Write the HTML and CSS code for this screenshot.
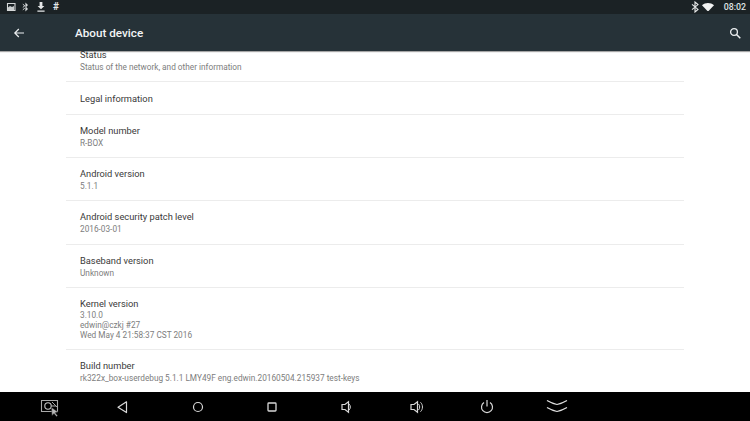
FILE: index.html
```html
<!doctype html>
<html lang="en">
<head>
  <meta charset="UTF-8">
  <title>About device</title>
  <link rel="stylesheet" href="styles.css">
</head>
<body>
  <div class="screen">
    <div class="statusbar">
      <div class="status-left">
        <svg class="ico" viewBox="0 0 12 12" width="12" height="12"><path d="M2.500 2.500h7.500v7H2.500z" fill="none" stroke="#d5d8d9" stroke-width="1.100"/><path d="M3 6.500l2-1.500 2 1 2-1v4H3z" fill="#c9cdce"/></svg>
        <svg class="ico" viewBox="0 0 12 12" width="12" height="12"><path d="M2.800 3.200l2 1.600-2 1.600M2.800 8.800l2-1.600" fill="none" stroke="#d5d8d9" stroke-width="1"/><path d="M5.400 1.500v9l2.600-2.400-1.800-2 1.800-2z" fill="#d5d8d9"/></svg>
        <svg class="ico" viewBox="0 0 12 12" width="12" height="12"><path d="M4.600 1h2.800v4h2L6 8.300 2.600 5h2zM2.400 9.600h7.200v1.200H2.400z" fill="#e4e6e7"/></svg>
        <span class="hash">#</span>
      </div>
      <div class="status-right">
        <svg class="ico" viewBox="0 0 12 12" width="12" height="12"><path d="M3 3.400l6 5-3 2.600V1l3 2.600-6 5" fill="none" stroke="#e8eaea" stroke-width="1.100"/></svg>
        <svg class="wifi" viewBox="0 0 14 10" width="12" height="8.600"><path d="M0 2.600C4-.8 10-.8 14 2.600L7 10z" fill="#f2f3f3"/></svg>
        <span class="clock">08:02</span>
      </div>
    </div>

    <div class="toolbar">
      <svg class="back" viewBox="0 0 12 12" width="12" height="12"><path d="M11 6H2M5.800 2L1.800 6l4 4" fill="none" stroke="#eceff1" stroke-width="1.200"/></svg>
      <h1>About device</h1>
      <svg class="search" viewBox="0 0 12 12" width="12" height="12"><circle cx="5" cy="5" r="3.400" fill="none" stroke="#eceff1" stroke-width="1.300"/><path d="M7.500 7.500l3.800 3.800" stroke="#eceff1" stroke-width="1.500"/></svg>
    </div>

    <div class="content">
      <div class="list">
        <div class="row row-status">
          <div class="title">Status</div>
          <div class="sub">Status of the network, and other information</div>
        </div>
        <div class="row row-single">
          <div class="title">Legal information</div>
        </div>
        <div class="row">
          <div class="title">Model number</div>
          <div class="sub">R-BOX</div>
        </div>
        <div class="row">
          <div class="title">Android version</div>
          <div class="sub">5.1.1</div>
        </div>
        <div class="row">
          <div class="title">Android security patch level</div>
          <div class="sub">2016-03-01</div>
        </div>
        <div class="row">
          <div class="title">Baseband version</div>
          <div class="sub">Unknown</div>
        </div>
        <div class="row row-kernel">
          <div class="title">Kernel version</div>
          <div class="sub">3.10.0<br>edwin@czkj #27<br>Wed May 4 21:58:37 CST 2016</div>
        </div>
        <div class="row">
          <div class="title">Build number</div>
          <div class="sub">rk322x_box-userdebug 5.1.1 LMY49F eng.edwin.20160504.215937 test-keys</div>
        </div>
      </div>
    </div>

    <div class="navbar">
      <svg class="nav-ico" viewBox="0 0 20 20" width="20" height="20"><path d="M1.500 3.500h16v11h-16z" fill="none" stroke="#a9a9a9" stroke-width="1.100"/><circle cx="8" cy="9" r="3.200" fill="none" stroke="#c8c8c8" stroke-width="1.100"/><path d="M12 5l6 6M11 9h5" stroke="#a9a9a9" stroke-width="1"/><path d="M11.500 10.500l.5 8 2-2 2.500 3 1-.8-2.300-3 2.600-.7z" fill="#bbb" stroke="#333" stroke-width=".5"/></svg>
      <svg class="nav-ico" viewBox="0 0 20 20" width="20" height="20"><path d="M14.500 4.800v10.800L6 10.200z" fill="none" stroke="#d8d8d8" stroke-width="1.200" stroke-linejoin="round"/></svg>
      <svg class="nav-ico" viewBox="0 0 20 20" width="20" height="20"><circle cx="10" cy="10" r="4.500" fill="none" stroke="#d8d8d8" stroke-width="1.200"/></svg>
      <svg class="nav-ico" viewBox="0 0 20 20" width="20" height="20"><rect x="6" y="6" width="8" height="8" rx=".8" fill="none" stroke="#d8d8d8" stroke-width="1.300"/></svg>
      <svg class="nav-ico" viewBox="0 0 20 20" width="20" height="20"><path d="M5 7.500h3L11.500 4.800v10.400L8 12.500H5z" fill="none" stroke="#d8d8d8" stroke-width="1.200"/><path d="M12 7c1.800 1.500 1.800 4.500 0 6" fill="none" stroke="#d8d8d8" stroke-width="1"/></svg>
      <svg class="nav-ico" viewBox="0 0 20 20" width="20" height="20"><path d="M3 7.500h3L9.500 4.800v10.400L6 12.500H3z" fill="none" stroke="#d8d8d8" stroke-width="1.200"/><path d="M10.500 7c1.600 1.500 1.600 4.500 0 6M12.500 5.300c2.600 2.500 2.600 6.900 0 9.400" fill="none" stroke="#d8d8d8" stroke-width="1"/></svg>
      <svg class="nav-ico" viewBox="0 0 20 20" width="20" height="20"><path d="M7 5.500a5.500 5.500 0 1 0 6 0M10 3v6.500" fill="none" stroke="#d8d8d8" stroke-width="1.200"/></svg>
      <svg class="nav-ico" viewBox="0 0 24 20" width="24" height="20"><path d="M2 3.500c3.500 2 6.500 3.300 10 4 3.500-.7 6.500-2 10-4M2 10.500c3.500 2 6.500 3.300 10 4 3.500-.7 6.500-2 10-4" fill="none" stroke="#e0e0e0" stroke-width="1.200"/></svg>
    </div>
  </div>
</body>
</html>
```

FILE: styles.css
```css
html, body {
  margin: 0;
  padding: 0;
  background-color: #000;
}

.screen {
  width: 750px;
  height: 421px;
  display: flex;
  flex-direction: column;
  overflow: hidden;
  font-family: Roboto, sans-serif;
}

.statusbar {
  height: 14px;
  flex: none;
  background-color: #1b2225;
  display: flex;
  justify-content: space-between;
  align-items: center;
  padding: 0 4px 0 5px;
  color: #e8eaea;
}

.status-left {
  display: flex;
  align-items: center;
  gap: 3px;
}

.status-right {
  display: flex;
  align-items: center;
}

.ico {
  display: block;
}

.hash {
  width: 12px;
  font-size: 10px;
  font-weight: 700;
  line-height: 12px;
  text-align: center;
  color: #e4e6e7;
}

.wifi {
  margin-left: 1px;
}

.clock {
  margin-left: 9.500px;
  font-size: 8.800px;
  font-weight: 500;
  color: #dfe2e3;
}

.toolbar {
  height: 37px;
  flex: none;
  background-color: #263238;
  display: flex;
  align-items: center;
  padding: 0 9px 0 13px;
  box-shadow: 0 1px 1px rgba(0, 0, 0, 0.35);
  position: relative;
  z-index: 1;
}

.toolbar h1 {
  margin: 0 0 0 50px;
  flex: 1;
  font-size: 11.700px;
  font-weight: 500;
  color: #f2f4f5;
}

.content {
  flex: 1;
  min-height: 0;
  background-color: #fff;
  overflow: hidden;
}

.list {
  margin: 0 66px;
}

.row {
  padding: 8px 14px 0;
  height: 34.200px;
  border-top: 1px solid #ececec;
}

.row-status {
  border-top: 0;
  height: 34px;
  margin-top: -4px;
  padding-top: 0;
}

.row-single {
  padding-top: 9px;
  height: 23px;
}

.row-kernel {
  height: 53px;
}

.row-kernel .sub {
  margin-top: -1px;
}

.title {
  font-size: 9.300px;
  line-height: 15px;
  color: #3a3a3a;
}

.sub {
  font-size: 8.250px;
  line-height: 10px;
  color: #7d7d7d;
}

.navbar {
  height: 29px;
  flex: none;
  background-color: #000;
  display: grid;
  grid-template-columns: 72px 72px 80px 68px 82px 59px 80px 60px;
  justify-items: center;
  align-items: center;
  padding-left: 14px;
}

.nav-ico {
  display: block;
}
```
